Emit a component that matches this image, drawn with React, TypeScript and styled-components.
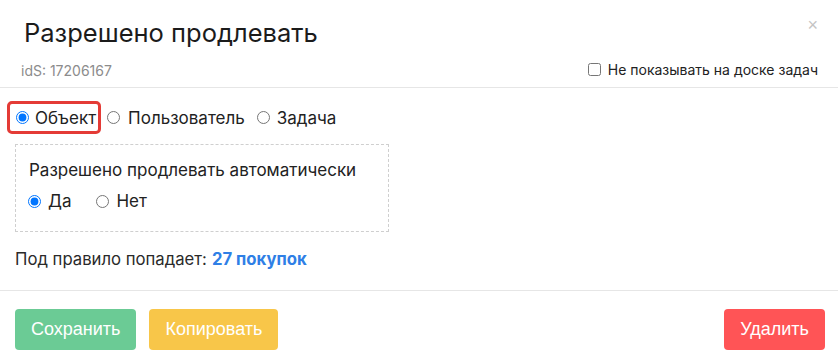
import React, { useState } from 'react'
import styled, { createGlobalStyle } from 'styled-components'

const GlobalStyle = createGlobalStyle`
	html, body {
		margin: 0;
		padding: 0;
		background: #ffffff;
	}
	body {
		font-family: Inter, 'Noto Sans', sans-serif;
		color: #222222;
	}
`

const Modal = styled.div`
	width: 838px;
	height: 363px;
	background: #ffffff;
	display: flex;
	flex-direction: column;
`

const Header = styled.div`
	padding: 18px 20px 8px 21px;
	border-bottom: 1px solid #e6e6e6;
`

const TitleRow = styled.div`
	display: flex;
	justify-content: space-between;
	align-items: flex-start;
`

const Title = styled.h2`
	margin: 0 0 0 3px;
	font-size: 25.5px;
	line-height: 30px;
	font-weight: 400;
	color: #1b1b1b;
`

const Close = styled.button`
	border: 0;
	background: none;
	padding: 0;
	margin: -2px 0 0 0;
	font-family: 'Liberation Sans', Arial, sans-serif;
	font-size: 18px;
	line-height: 18px;
	color: #c4c4c4;
	cursor: pointer;
`

const MetaRow = styled.div`
	display: flex;
	justify-content: space-between;
	align-items: center;
	margin-top: 11px;
	height: 20px;
`

const Ids = styled.span`
	font-size: 14px;
	color: #8c8c8c;
	margin-top: 3px;
`

const CheckLabel = styled.label`
	display: flex;
	align-items: center;
	gap: 7px;
	font-size: 14px;
	color: #222222;
	input {
		margin: 0;
		width: 13px;
		height: 13px;
	}
`

const Body = styled.div`
	flex: 1;
	padding: 13px 15px 0 7px;
	display: flex;
	flex-direction: column;
`

const OptionRow = styled.div`
	display: flex;
	align-items: center;
	gap: 6px;
`

const Option = styled.label<{ $highlight?: boolean; $gap?: number }>`
	display: flex;
	align-items: center;
	gap: ${(p) => p.$gap ?? 7}px;
	font-size: 17px;
	line-height: 20px;
	color: #222222;
	height: ${(p) => (p.$highlight ? 27 : 33)}px;
	padding: ${(p) => (p.$highlight ? '0 2px 0 6px' : '0 6px 0 0')};
	border: ${(p) => (p.$highlight ? '3px solid #e43b36' : '0')};
	border-radius: 5px;
	input {
		margin: 0;
		width: 13px;
		height: 13px;
	}
`

const AutoBox = styled.div`
	margin: 10px 0 0 8px;
	border: 1px dashed #cfcfcf;
	padding: 15px 0 0 13px;
	box-sizing: border-box;
	width: 374px;
	height: 88px;
`

const BoxTitle = styled.div`
	font-size: 17px;
	line-height: 20px;
	color: #222222;
`

const YesNoRow = styled.div`
	display: flex;
	align-items: center;
	margin-top: 11px;
	margin-left: -1px;
	gap: 25px;
`

const SmallOption = styled.label`
	display: flex;
	align-items: center;
	gap: 7px;
	font-size: 17px;
	line-height: 20px;
	input {
		margin: 0;
		width: 13px;
		height: 13px;
	}
`

const Summary = styled.div`
	margin: 17px 0 0 8px;
	font-size: 16.7px;
	line-height: 20px;
	color: #2a2a2a;
`

const Count = styled.a`
	color: #2f7fe6;
	font-weight: 700;
	text-decoration: none;
	margin-left: 5px;
`

const Footer = styled.div`
	border-top: 1px solid #e6e6e6;
	padding: 18px 13px 13px 15px;
	display: flex;
	align-items: center;
	gap: 13px;
`

const Button = styled.button<{ $color: string; $push?: boolean }>`
	height: 41px;
	padding: 0 16px;
	border: 0;
	border-radius: 4px;
	background: ${(p) => p.$color};
	color: #ffffff;
	font-family: 'Liberation Sans', Arial, sans-serif;
	font-size: 18px;
	cursor: pointer;
	margin-left: ${(p) => (p.$push ? 'auto' : '0')};
`

export default function App() {
	const [target, setTarget] = useState('object')
	const [auto, setAuto] = useState('yes')
	const [hide, setHide] = useState(false)

	return (
		<>
			<GlobalStyle />
			<Modal>
				<Header>
					<TitleRow>
						<Title>Разрешено продлевать</Title>
						<Close aria-label="Закрыть">×</Close>
					</TitleRow>
					<MetaRow>
						<Ids>idS: 17206167</Ids>
						<CheckLabel>
							<input
								type="checkbox"
								checked={hide}
								onChange={() => setHide(!hide)}
							/>
							Не показывать на доске задач
						</CheckLabel>
					</MetaRow>
				</Header>
				<Body>
					<OptionRow>
						<Option $highlight $gap={6}>
							<input
								type="radio"
								name="target"
								checked={target === 'object'}
								onChange={() => setTarget('object')}
							/>
							Объект
						</Option>
						<Option $gap={8}>
							<input
								type="radio"
								name="target"
								checked={target === 'user'}
								onChange={() => setTarget('user')}
							/>
							Пользователь
						</Option>
						<Option>
							<input
								type="radio"
								name="target"
								checked={target === 'task'}
								onChange={() => setTarget('task')}
							/>
							Задача
						</Option>
					</OptionRow>
					<AutoBox>
						<BoxTitle>Разрешено продлевать автоматически</BoxTitle>
						<YesNoRow>
							<SmallOption>
								<input
									type="radio"
									name="auto"
									checked={auto === 'yes'}
									onChange={() => setAuto('yes')}
								/>
								Да
							</SmallOption>
							<SmallOption>
								<input
									type="radio"
									name="auto"
									checked={auto === 'no'}
									onChange={() => setAuto('no')}
								/>
								Нет
							</SmallOption>
						</YesNoRow>
					</AutoBox>
					<Summary>
						Под правило попадает:
						<Count href="#">27 покупок</Count>
					</Summary>
				</Body>
				<Footer>
					<Button $color="#6bcb95">Сохранить</Button>
					<Button $color="#f8c649">Копировать</Button>
					<Button $color="#ff5456" $push>
						Удалить
					</Button>
				</Footer>
			</Modal>
		</>
	)
}
